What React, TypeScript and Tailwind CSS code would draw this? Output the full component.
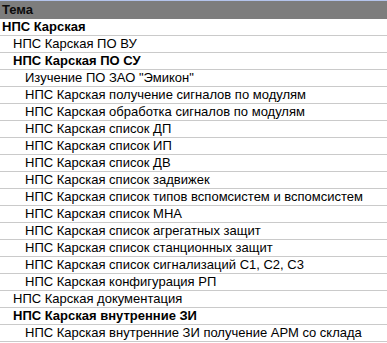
import React from "react";

type Row = { text: string; level: number; bold?: boolean };

const rows: Row[] = [
  { text: "НПС Карская", level: 0, bold: true },
  { text: "НПС Карская ПО ВУ", level: 1 },
  { text: "НПС Карская ПО СУ", level: 1, bold: true },
  { text: "Изучение ПО ЗАО \"Эмикон\"", level: 2 },
  { text: "НПС Карская получение сигналов по модулям", level: 2 },
  { text: "НПС Карская обработка сигналов по модулям", level: 2 },
  { text: "НПС Карская список ДП", level: 2 },
  { text: "НПС Карская список ИП", level: 2 },
  { text: "НПС Карская список ДВ", level: 2 },
  { text: "НПС Карская список задвижек", level: 2 },
  { text: "НПС Карская список типов вспомсистем и вспомсистем", level: 2 },
  { text: "НПС Карская список МНА", level: 2 },
  { text: "НПС Карская список агрегатных защит", level: 2 },
  { text: "НПС Карская список станционных защит", level: 2 },
  { text: "НПС Карская список сигнализаций С1, С2, С3", level: 2 },
  { text: "НПС Карская конфигурация РП", level: 2 },
  { text: "НПС Карская документация", level: 1 },
  { text: "НПС Карская внутренние ЗИ", level: 1, bold: true },
  { text: "НПС Карская внутренние ЗИ получение АРМ со склада", level: 2 },
];

const indent = ["pl-[2px]", "pl-[13px]", "pl-[25px]"];

export default function App() {
  return (
    <div className="w-[387px] h-[343px] overflow-hidden bg-white text-black font-['Liberation_Sans',Arial,sans-serif] text-[13px]">
      <div className="h-[19px] border-t border-[#b4c4ec] bg-[#7d7d7d] pl-[2px] leading-[18px] font-bold text-[#0c0c0c] whitespace-nowrap">
        Тема
      </div>
      {rows.map((r, i) => (
        <div
          key={i}
          className={`h-[17px] border-b border-[#cacaca] leading-[16px] whitespace-nowrap ${indent[r.level]} ${r.bold ? "font-bold" : ""}`}
        >
          {r.text}
        </div>
      ))}
    </div>
  );
}
